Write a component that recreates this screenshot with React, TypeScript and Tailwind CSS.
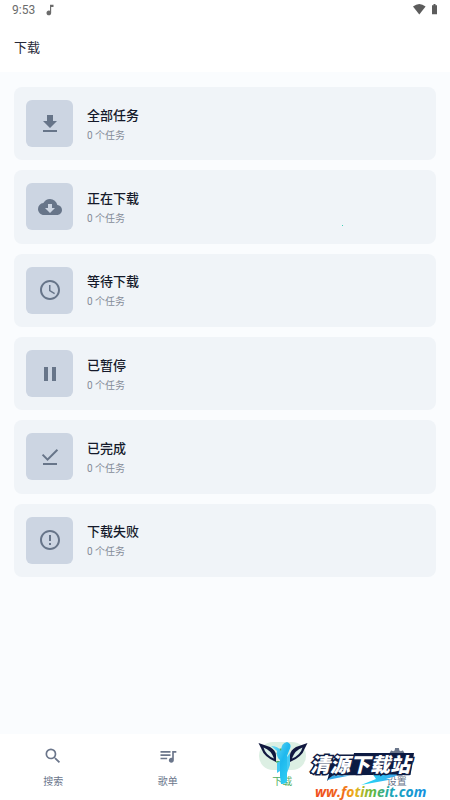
import type { IconType } from "react-icons";
import {
  MdCloudDownload,
  MdDownload,
  MdDownloadDone,
  MdErrorOutline,
  MdMusicNote,
  MdPause,
  MdQueueMusic,
  MdAccessTime,
  MdSearch,
  MdSettings,
} from "react-icons/md";

type Task = { title: string; count: number; Icon: IconType };

const tasks: Task[] = [
  { title: "全部任务", count: 0, Icon: MdDownload },
  { title: "正在下载", count: 0, Icon: MdCloudDownload },
  { title: "等待下载", count: 0, Icon: MdAccessTime },
  { title: "已暂停", count: 0, Icon: MdPause },
  { title: "已完成", count: 0, Icon: MdDownloadDone },
  { title: "下载失败", count: 0, Icon: MdErrorOutline },
];

const tabs: { label: string; Icon: IconType; active?: boolean }[] = [
  { label: "搜索", Icon: MdSearch },
  { label: "歌单", Icon: MdQueueMusic },
  { label: "下载", Icon: MdDownload, active: true },
  { label: "设置", Icon: MdSettings },
];

function StatusBar() {
  return (
    <div className="flex h-5 items-center px-3 text-[#6b6b6b]">
      <span className="font-[Roboto,sans-serif] text-xs leading-5">9:53</span>
      <MdMusicNote className="ml-2 size-3.5" />
      <svg className="ml-auto h-5 w-[26px]" viewBox="0 0 26 20" fill="#5c5c5c">
        <path d="M1 6.500Q7.300 1.500 13.600 6.500L7.300 14.500Z" />
        <path d="M21.500 4h2v1.200h1.500v9h-5v-9h1.500z" />
      </svg>
    </div>
  );
}

function TaskCard({ title, count, Icon }: Task) {
  return (
    <button className="flex items-center rounded-lg bg-[#f0f4f8] px-3 text-left">
      <span className="flex size-[47px] items-center justify-center rounded-md bg-[#ccd5e2] text-[#677589]">
        <Icon className="size-6" />
      </span>
      <span className="ml-[14px] flex flex-col pt-1">
        <span className="text-[13px] leading-5 font-medium text-[#151a2b]">{title}</span>
        <span className="text-[10px] leading-5 text-[#858c98]">{count} 个任务</span>
      </span>
    </button>
  );
}

function Watermark() {
  return (
    <svg
      className="pointer-events-none absolute right-0 bottom-0 h-[64px] w-[195px]"
      viewBox="255 736 195 64"
      role="img"
      aria-label="清源下载站 www.fotimeit.com"
    >
      <defs>
        <linearGradient id="beam" x1="0" y1="0" x2="1" y2="1">
          <stop offset="0" stopColor="#7fe3f7" />
          <stop offset="0.5" stopColor="#1fb8ee" />
          <stop offset="1" stopColor="#35d5f5" />
        </linearGradient>
        <linearGradient id="bolt" x1="0" y1="0" x2="1" y2="0">
          <stop offset="0" stopColor="#1fdcf5" />
          <stop offset="1" stopColor="#3fa2ee" />
        </linearGradient>
        <linearGradient id="url" gradientUnits="userSpaceOnUse" x1="315" y1="0" x2="426" y2="0">
          <stop offset="0" stopColor="#ef4a1c" />
          <stop offset="0.25" stopColor="#f06a1e" />
          <stop offset="0.36" stopColor="#efb21b" />
          <stop offset="0.52" stopColor="#62b83a" />
          <stop offset="0.68" stopColor="#1da5b5" />
          <stop offset="1" stopColor="#168fe0" />
        </linearGradient>
      </defs>
      <path d="M258.500 743L270 747Q275.500 750 276 755V762Q264 757 261.500 749Z" fill="#11183f" />
      <path d="M307.500 743L296 747Q290.500 750 290 755V762Q302 757 304.500 749Z" fill="#11183f" />
      <path d="M263.500 747.500Q271 750 274 758.500Q265.500 755 263.500 747.500Z" fill="#d9efe8" />
      <path d="M302.500 747.500Q295 750 292 758.500Q300.500 755 302.500 747.500Z" fill="#d9efe8" />
      <path
        d="M271 746Q278 746 281 751Q281 743 287 742Q293 744 289 751L287 756V781Q286 784.500 281 784L280 776V760Q276 757 277 751Z"
        fill="url(#beam)"
      />
      <path d="M277 763l3-2v10l-3 2zM287 757l3-4v12l-3 8z" fill="#43c9f3" />
      <path d="M354 753H414L410.500 775H369L333 775.500L327 781L329 774H310L314 764H352Z" fill="#0b1a42" />
      <path d="M333 775.500H350L327 780Z" fill="#35a9e8" />
      <path d="M373 774.500H400L386 779L391 779.500L361 785L376 779Z" fill="url(#bolt)" />
      <text
        x="310"
        y="772"
        fill="#fff"
        stroke="#101d45"
        strokeWidth="3"
        paintOrder="stroke"
        fontSize="20"
        fontWeight="900"
        fontStyle="italic"
        fontFamily="'Noto Sans CJK SC', sans-serif"
      >
        清源下载站
      </text>
      <text
        x="315"
        y="797"
        fill="url(#url)"
        fontSize="14"
        fontWeight="700"
        fontStyle="italic"
        fontFamily="'Open Sans', sans-serif"
      >
        ww.fotimeit.com
      </text>
    </svg>
  );
}

export default function App() {
  return (
    <div className="relative flex min-h-screen flex-col overflow-hidden bg-[#fafcfe] font-[Roboto,'Noto_Sans_CJK_SC',sans-serif]">
      <header className="h-[72px] bg-white">
        <StatusBar />
        <h1 className="px-[14px] pt-[18px] text-[13px] leading-5 text-[#272938]">下载</h1>
      </header>
      <main className="flex-1 px-[14px] pt-[15px]">
        <div className="grid h-[490px] auto-rows-fr gap-[10px]">
          {tasks.map((task) => (
            <TaskCard key={task.title} {...task} />
          ))}
        </div>
      </main>
      <nav className="-mx-1 grid h-[66px] grid-cols-4 bg-white pt-2">
        {tabs.map(({ label, Icon, active }) => (
          <a
            key={label}
            href="#"
            className={`flex flex-col items-center ${active ? "text-[#4fae62]" : "text-[#6b768b]"}`}
          >
            <span
              className={`flex h-7 w-[47px] items-center justify-center rounded-full ${active ? "bg-[#dcefe3]" : ""}`}
            >
              <Icon className="size-5" />
            </span>
            <span className="mt-1 text-[10px] leading-4">{label}</span>
          </a>
        ))}
      </nav>
      <span className="absolute top-[225px] left-[342px] size-px bg-[#3fd0b8]" />
      <Watermark />
    </div>
  );
}
